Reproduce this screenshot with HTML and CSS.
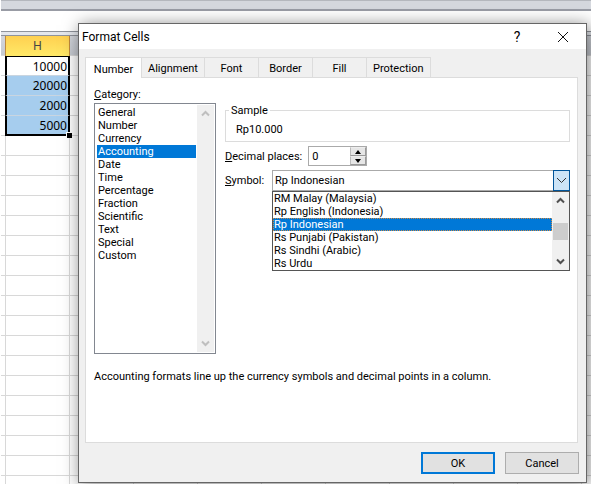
FILE: index.html
```html
<!DOCTYPE html>
<html lang="en">
<head>
    <meta charset="UTF-8">
    <meta name="viewport" content="width=device-width, initial-scale=1.0">
    <title>Format Cells</title>
    <link rel="stylesheet" href="styles.css">
</head>
<body>
    <main class="workbook">
        <div class="ribbon-edge"></div>
        <div class="formula-bar"></div>
        <div class="formula-edge"></div>
        <div class="sheet">
            <table class="column">
                <thead>
                    <tr><th scope="col">H</th></tr>
                </thead>
                <tbody>
                    <tr class="active"><td>10000</td></tr>
                    <tr><td>20000</td></tr>
                    <tr><td>2000</td></tr>
                    <tr><td>5000</td></tr>
                </tbody>
            </table>
        </div>
    </main>

    <section class="dialog" role="dialog" aria-labelledby="dialogTitle">
        <header class="titlebar">
            <h1 id="dialogTitle">Format Cells</h1>
            <button class="title-btn help" type="button">?</button>
            <button class="title-btn" type="button" aria-label="Close">
                <svg width="12" height="12" viewBox="0 0 12 12"><path d="M1 1L11 11M11 1L1 11" /></svg>
            </button>
        </header>

        <nav class="tabs" role="tablist">
            <button class="tab selected" type="button" role="tab">Number</button>
            <button class="tab" type="button" role="tab">Alignment</button>
            <button class="tab" type="button" role="tab">Font</button>
            <button class="tab" type="button" role="tab">Border</button>
            <button class="tab" type="button" role="tab">Fill</button>
            <button class="tab" type="button" role="tab">Protection</button>
        </nav>

        <div class="panel">
            <div class="columns">
                <div class="category">
                    <label for="category"><u>C</u>ategory:</label>
                    <div class="listbox">
                        <select id="category" size="12">
                            <option>General</option>
                            <option>Number</option>
                            <option>Currency</option>
                            <option selected>Accounting</option>
                            <option>Date</option>
                            <option>Time</option>
                            <option>Percentage</option>
                            <option>Fraction</option>
                            <option>Scientific</option>
                            <option>Text</option>
                            <option>Special</option>
                            <option>Custom</option>
                        </select>
                        <div class="scrollbar disabled">
                            <svg width="9" height="7" viewBox="0 0 9 7"><path d="M1 5.5L4.5 2L8 5.5" /></svg>
                            <svg width="9" height="7" viewBox="0 0 9 7"><path d="M1 1.5L4.5 5L8 1.5" /></svg>
                        </div>
                    </div>
                </div>

                <div class="settings">
                    <fieldset class="sample">
                        <legend>Sample</legend>
                        <output>Rp10.000</output>
                    </fieldset>

                    <div class="field">
                        <label for="decimals"><u>D</u>ecimal places:</label>
                        <div class="spinner">
                            <input type="number" id="decimals" value="0" min="0" max="30">
                            <div class="spin-btns">
                                <button type="button" aria-label="More"><svg width="6" height="4" viewBox="0 0 6 4"><path d="M0 4L3 0L6 4Z" /></svg></button>
                                <button type="button" aria-label="Fewer"><svg width="6" height="4" viewBox="0 0 6 4"><path d="M0 0L3 4L6 0Z" /></svg></button>
                            </div>
                        </div>
                    </div>

                    <div class="field symbol">
                        <label for="symbol"><u>S</u>ymbol:</label>
                        <div class="combo">
                            <select id="symbol">
                                <option>Rp Indonesian</option>
                            </select>
                            <span class="combo-arrow">
                                <svg width="11" height="7" viewBox="0 0 11 7"><path d="M1 1L5.5 5.5L10 1" /></svg>
                            </span>
                            <div class="dropdown">
                                <select size="6" aria-label="Symbol list">
                                    <option>RM Malay (Malaysia)</option>
                                    <option>Rp English (Indonesia)</option>
                                    <option selected>Rp Indonesian</option>
                                    <option>Rs Punjabi (Pakistan)</option>
                                    <option>Rs Sindhi (Arabic)</option>
                                    <option>Rs Urdu</option>
                                </select>
                                <div class="scrollbar">
                                    <svg width="9" height="7" viewBox="0 0 9 7"><path d="M1 5.5L4.5 2L8 5.5" /></svg>
                                    <span class="thumb"></span>
                                    <svg width="9" height="7" viewBox="0 0 9 7"><path d="M1 1.5L4.5 5L8 1.5" /></svg>
                                </div>
                            </div>
                        </div>
                    </div>
                </div>
            </div>

            <p class="hint">Accounting formats line up the currency symbols and decimal points in a column.</p>
        </div>

        <footer class="actions">
            <button class="btn default" type="button">OK</button>
            <button class="btn" type="button">Cancel</button>
        </footer>
    </section>
</body>
</html>
```
FILE: styles.css
```css
* {
    box-sizing: border-box;
}

body {
    margin: 0;
    font: 11px/13px Roboto, "Noto Sans", sans-serif;
    color: #000;
    background: #fff;
}

button, input, select {
    font: inherit;
    color: inherit;
    margin: 0;
    padding: 0;
}

/* Worksheet behind the dialog */

.workbook {
    display: flex;
    flex-direction: column;
    height: 100vh;
    padding-left: 1px;
    overflow: hidden;
}

.ribbon-edge {
    flex: none;
    height: 11px;
    border-top: 1px solid #b4b7bd;
    border-bottom: 2px solid #999ca5;
    background: #d5d8de;
}

.formula-bar {
    flex: none;
    height: 20px;
}

.formula-edge {
    flex: none;
    height: 5px;
    border-top: 1px solid #8f939b;
    border-bottom: 1px solid #8f939b;
    background: #e4e7ec;
}

.sheet {
    flex: 1;
    padding-left: 4px;
    background:
        linear-gradient(#d3d6dc, #c6cad1) 0 0 / 100% 19px no-repeat,
        linear-gradient(#d8d8d8, #d8d8d8) 0 19px / 100% 1px no-repeat,
        linear-gradient(90deg, #d8d8d8 1px, transparent 1px) 4px 0 / 64px 20px,
        linear-gradient(transparent 19px, #d8d8d8 19px) 0 0 / 64px 20px;
}

.column {
    position: relative;
    width: 65px;
    border-spacing: 0;
    font: 12px/18px "Noto Sans", sans-serif;
}

.column::after {
    content: "";
    position: absolute;
    right: -2px;
    bottom: -2px;
    width: 5px;
    height: 5px;
    border: solid #fff;
    border-width: 1px 0 0 1px;
    background: #000;
}

.column th {
    height: 20px;
    padding: 0;
    border: solid #c08a3c;
    border-width: 0 1px;
    background: linear-gradient(#ffd050, #ffe968);
    color: #444;
    font-weight: normal;
}

.column td {
    height: 20px;
    padding: 1px 1px 0 0;
    border: solid #000;
    border-width: 0 2px;
    border-bottom: 1px solid #c9d5e0;
    background: #a6cdee;
    text-align: right;
}

.column .active td {
    border-top: 1px solid #000;
    background: #fff;
    line-height: 17px;
}

.column tr:last-child td {
    border-bottom: 2px solid #000;
    line-height: 17px;
}

/* Dialog */

.dialog {
    position: absolute;
    top: 23px;
    left: 78px;
    right: 4px;
    border: 1px solid #666;
    background: #f0f0f0;
    box-shadow: 2px 2px 16px rgba(0, 0, 0, 0.5);
}

.titlebar {
    display: flex;
    align-items: center;
    height: 25px;
    padding-left: 3px;
    background: #fff;
    font-size: 12px;
    line-height: 16px;
}

.titlebar h1 {
    flex: 1;
    margin: 0;
    font: inherit;
}

.title-btn {
    width: 46px;
    height: 25px;
    border: 0;
    background: none;
}

.title-btn.help {
    font-size: 14px;
}

.title-btn svg {
    display: block;
    margin: auto;
    fill: none;
    stroke: #111;
}

.tabs {
    display: flex;
    align-items: flex-end;
    padding: 8px 6px 0;
}

.tab {
    min-width: 54px;
    height: 20px;
    padding: 2px 6px 0;
    border: solid #dcdcdc;
    border-width: 1px 1px 0 0;
    background: #f0f0f0;
}

.tab.selected {
    min-width: 57px;
    height: 21px;
    margin-bottom: -1px;
    border-left-width: 1px;
    background: #fff;
    z-index: 1;
}

.panel {
    margin: 0 8px 0 6px;
    padding: 10px 7px 59px 8px;
    border: 1px solid #dcdcdc;
    background: #fff;
}

.columns {
    display: flex;
    gap: 9px;
}

.category {
    display: flex;
    flex-direction: column;
    gap: 2px;
    width: 122px;
}

.listbox {
    display: flex;
    height: 251px;
    padding: 1px;
    border: 1px solid #828790;
}

.listbox select,
.dropdown select {
    flex: 1;
    min-width: 0;
    height: 100%;
    border: 0;
    border-radius: 0;
    outline: none;
    background: #fff;
    overflow: hidden;
}

.listbox select {
    padding: 1px;
}

.listbox option,
.dropdown option {
    height: 13px;
    min-height: 13px;
    padding: 0 1px;
    line-height: 13px;
}

.listbox option:checked,
.dropdown option:checked {
    background-image: linear-gradient(#0078d7, #0078d7);
    -webkit-text-fill-color: #fff;
}

.dropdown option:checked {
    outline: 1px dotted #c98a4a;
    outline-offset: -1px;
}

.scrollbar {
    display: flex;
    flex-direction: column;
    justify-content: space-between;
    align-items: center;
    width: 17px;
    padding: 5px 0;
    background: #f0f0f0;
}

.scrollbar svg {
    fill: none;
    stroke: #505050;
    stroke-width: 2;
}

.scrollbar.disabled svg {
    stroke: #bfbfbf;
}

.thumb {
    width: 15px;
    height: 17px;
    background: #cdcdcd;
}

.settings {
    display: flex;
    flex: 1;
    flex-direction: column;
    min-width: 0;
    padding-top: 16px;
}

.sample {
    min-width: 0;
    height: 38px;
    margin: 0;
    padding: 6px 10px 0;
    border: 1px solid #dcdcdc;
}

.sample legend {
    margin-left: -7px;
    padding: 0 2px;
}

.sample output {
    display: block;
}

.field {
    display: flex;
    align-items: center;
    margin-top: 4px;
}

.field label {
    min-width: 41px;
}

.spinner {
    display: flex;
    width: 59px;
    height: 20px;
    margin-left: 6px;
    border: 1px solid #aaa;
}

.spinner input {
    flex: 1;
    min-width: 0;
    padding-left: 3px;
    border: 0;
    outline: none;
    appearance: textfield;
}

.spinner input::-webkit-inner-spin-button {
    appearance: none;
}

.spin-btns {
    display: flex;
    flex-direction: column;
    width: 16px;
}

.spin-btns button {
    display: flex;
    flex: 1;
    align-items: center;
    justify-content: center;
    border: 1px solid #aaa;
    border-color: #eee #999 #999 #bbb;
    background: #e6e6e6;
}

.combo {
    position: relative;
    flex: 1;
    margin-left: 6px;
}

.combo > select {
    display: block;
    width: 100%;
    height: 21px;
    padding-left: 2px;
    border: 1px solid #aaa;
    border-radius: 0;
    background: #fff;
    appearance: none;
}

.combo-arrow {
    position: absolute;
    top: 0;
    right: 0;
    display: grid;
    place-items: center;
    width: 17px;
    height: 21px;
    border: 1px solid #005499;
    background: #cce4f7;
    pointer-events: none;
}

.combo-arrow svg {
    fill: none;
    stroke: #333;
}

.dropdown {
    position: absolute;
    top: 100%;
    left: 0;
    right: 0;
    display: flex;
    height: 80px;
    border: 1px solid #555;
    background: #fff;
}

.hint {
    margin: 16px 0 0;
}

.actions {
    display: flex;
    justify-content: flex-end;
    gap: 10px;
    padding: 9px 7px 8px;
}

.btn {
    width: 74px;
    height: 22px;
    border: 1px solid #adadad;
    background: #e1e1e1;
}

.btn.default {
    border: 2px solid #0078d7;
}
```
